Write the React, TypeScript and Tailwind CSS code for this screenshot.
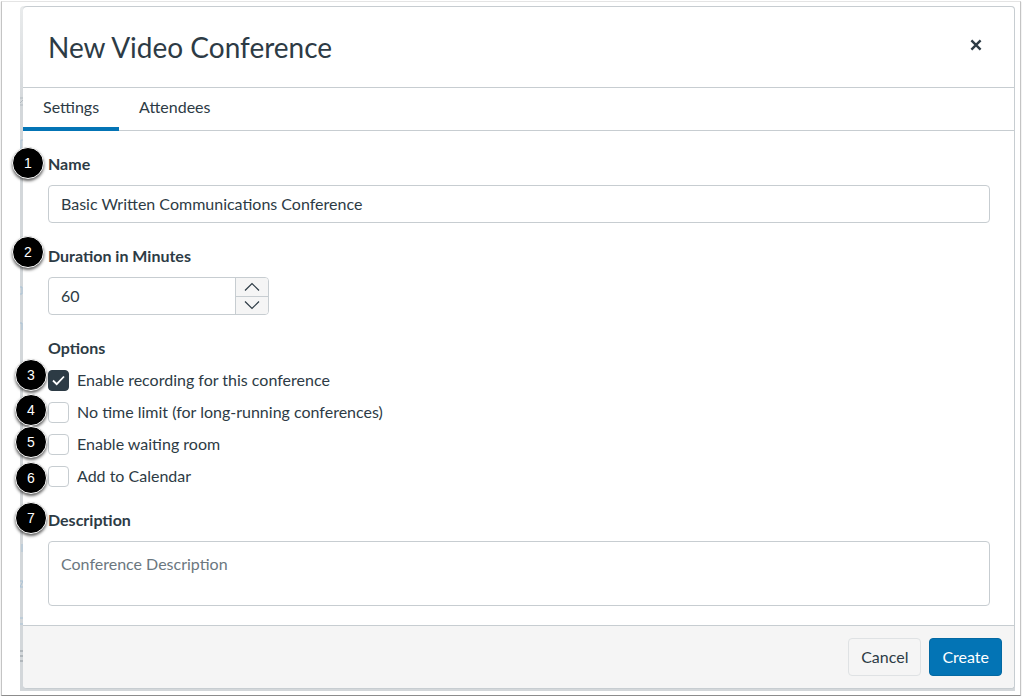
import { useState, type ReactNode } from "react";

const options = [
  { id: "recording", label: "Enable recording for this conference", step: 3, marker: "-top-[9px]" },
  { id: "no-limit", label: "No time limit (for long-running conferences)", step: 4, marker: "-top-[6px]" },
  { id: "waiting-room", label: "Enable waiting room", step: 5, marker: "-top-[6px]" },
  { id: "calendar", label: "Add to Calendar", step: 6, marker: "-top-[2px]" },
];

const fieldClass =
  "w-full rounded border border-[#c7cdd1] bg-white px-3 text-[#2d3b45] placeholder:text-[#6b7780] outline-none focus:border-[#0374b5]";

function Step({ className, children }: { className: string; children: ReactNode }) {
  return (
    <span
      className={`absolute z-10 flex size-8 items-center justify-center rounded-full border border-white bg-black font-['Liberation_Sans',sans-serif] text-sm font-normal text-white shadow-[0_2px_3px_rgba(0,0,0,0.6)] ${className}`}
    >
      {children}
    </span>
  );
}

// Slivers of the page that sits behind the dialog
function PageEdge() {
  return (
    <svg className="absolute top-0 left-0" width="3" height="684" viewBox="0 0 3 684" fill="none" aria-hidden="true">
      <path d="M0 92h3M0 99h3M0 97l3-3" stroke="#b3bbc1" />
      <path d="M3 134H1v12M0 281h2v7H0M0 317h2v7M2 538v8M0 575h3l-3 6h3M0 612h3M0 618h3" stroke="#a9c2d6" />
      <path d="M0 645h3M0 650h3M0 655h3" stroke="#8f979d" />
    </svg>
  );
}

export default function App() {
  const [tab, setTab] = useState("Settings");
  const [name, setName] = useState("Basic Written Communications Conference");
  const [duration, setDuration] = useState(60);
  const [checked, setChecked] = useState<string[]>(["recording"]);

  const toggle = (id: string) =>
    setChecked((prev) => (prev.includes(id) ? prev.filter((item) => item !== id) : [...prev, id]));

  return (
    <main className="bg-white px-px pt-px font-[Lato,sans-serif] text-base leading-6 text-[#2d3b45]">
      <div className="border border-[#c4c4c4] border-t-[#e4e4e4] border-b-[#8c8c8c] pt-1 pr-[5px] pb-1 pl-[18px] shadow-[0_1px_1px_rgba(0,0,0,0.25)]">
        <div className="relative rounded-t bg-gradient-to-b from-[#e9ebec] to-[#d3d7da] to-15% pb-[2px] pl-[3px]">
          <PageEdge />
          <div role="dialog" aria-labelledby="dialog-title" className="relative rounded border border-l-0 border-[#c7cdd1] bg-white">
            <header className="flex h-[81px] items-center justify-between border-b border-[#c7cdd1] pr-8 pl-[25px]">
              <h1 id="dialog-title" className="text-[28px] leading-9">
                New Video Conference
              </h1>
              <button type="button" aria-label="Close" className="mb-1 cursor-pointer">
                <svg width="12" height="12" viewBox="0 0 12 12" fill="none" stroke="currentColor" strokeWidth="2.4">
                  <path d="M1.4 1.4l9.2 9.2M10.6 1.4l-9.2 9.2" />
                </svg>
              </button>
            </header>

            <div role="tablist" className="flex border-b border-[#c7cdd1]">
              {["Settings", "Attendees"].map((item) => (
                <button
                  key={item}
                  type="button"
                  role="tab"
                  aria-selected={tab === item}
                  onClick={() => setTab(item)}
                  className={`-mb-px cursor-pointer border-b-4 px-5 pt-[7px] pb-2 ${
                    tab === item ? "border-[#0374b5]" : "border-transparent"
                  }`}
                >
                  {item}
                </button>
              ))}
            </div>

            <form id="conference-form" onSubmit={(e) => e.preventDefault()} className="flex flex-col gap-[21px] pt-[21px] pr-6 pb-[19px] pl-[25px]">
              <div className="relative">
                <Step className="-left-9 -top-[5px]">1</Step>
                <label htmlFor="name" className="mb-[9px] block font-bold">
                  Name
                </label>
                <input id="name" type="text" value={name} onChange={(e) => setName(e.target.value)} className={`block h-[38px] pb-[2px] ${fieldClass}`} />
              </div>

              <div className="relative">
                <Step className="-left-9 -top-2">2</Step>
                <label htmlFor="duration" className="mb-[9px] block font-bold">
                  Duration in Minutes
                </label>
                <div className="flex h-[38px] w-[221px] overflow-hidden rounded border border-[#c7cdd1]">
                  <input
                    id="duration"
                    type="number"
                    value={duration}
                    onChange={(e) => setDuration(Number(e.target.value))}
                    className="min-w-0 flex-1 [appearance:textfield] px-3 outline-none [&::-webkit-inner-spin-button]:appearance-none"
                  />
                  <div className="flex w-[33px] flex-col border-l border-[#c7cdd1] bg-[#f5f5f5]">
                    <button
                      type="button"
                      aria-label="Increase duration"
                      onClick={() => setDuration(duration + 1)}
                      className="flex flex-1 cursor-pointer items-center justify-center border-b border-[#c7cdd1]"
                    >
                      <svg width="16" height="10" viewBox="0 0 16 10" fill="none" stroke="currentColor" strokeWidth="1.2">
                        <path d="M1 8.500L8 1.500l7 7" />
                      </svg>
                    </button>
                    <button
                      type="button"
                      aria-label="Decrease duration"
                      onClick={() => setDuration(Math.max(0, duration - 1))}
                      className="flex flex-1 cursor-pointer items-center justify-center"
                    >
                      <svg width="16" height="10" viewBox="0 0 16 10" fill="none" stroke="currentColor" strokeWidth="1.2">
                        <path d="M1 1.500l7 7 7-7" />
                      </svg>
                    </button>
                  </div>
                </div>
              </div>

              <fieldset className="-mb-px">
                <legend className="mb-2 font-bold">Options</legend>
                <div className="flex flex-col gap-2">
                  {options.map((option) => (
                    <div key={option.id} className="relative flex items-center gap-2">
                      <Step className={`-left-[33px] ${option.marker}`}>{option.step}</Step>
                      <span className="relative flex">
                        <input
                          id={option.id}
                          type="checkbox"
                          checked={checked.includes(option.id)}
                          onChange={() => toggle(option.id)}
                          className="peer size-[21px] cursor-pointer appearance-none rounded border border-[#c7cdd1] bg-white checked:border-[#2d3b45] checked:bg-[#2d3b45]"
                        />
                        <svg
                          className="pointer-events-none absolute inset-0 hidden peer-checked:block"
                          viewBox="0 0 21 21"
                          fill="none"
                          stroke="white"
                          strokeWidth="1.8"
                        >
                          <path d="M5 10.500l3.700 3.700 7.300-7.700" />
                        </svg>
                      </span>
                      <label htmlFor={option.id} className="cursor-pointer">
                        {option.label}
                      </label>
                    </div>
                  ))}
                </div>
              </fieldset>

              <div className="relative">
                <Step className="-left-[33px] -top-[6px]">7</Step>
                <label htmlFor="description" className="mb-[9px] block font-bold">
                  Description
                </label>
                <textarea
                  id="description"
                  placeholder="Conference Description"
                  className={`block h-[65px] resize-none py-[10px] ${fieldClass}`}
                />
              </div>
            </form>

            <footer className="flex justify-end gap-2 rounded-b border-t border-[#c7cdd1] bg-[#f5f5f5] p-3">
              <button type="button" className="h-[38px] cursor-pointer rounded border border-[#dfe2e4] bg-[#f5f5f5] px-3">
                Cancel
              </button>
              <button
                type="submit"
                form="conference-form"
                className="h-[38px] cursor-pointer rounded border border-[#0369a3] bg-[#0374b5] px-3 text-white"
              >
                Create
              </button>
            </footer>
          </div>
        </div>
      </div>
    </main>
  );
}
